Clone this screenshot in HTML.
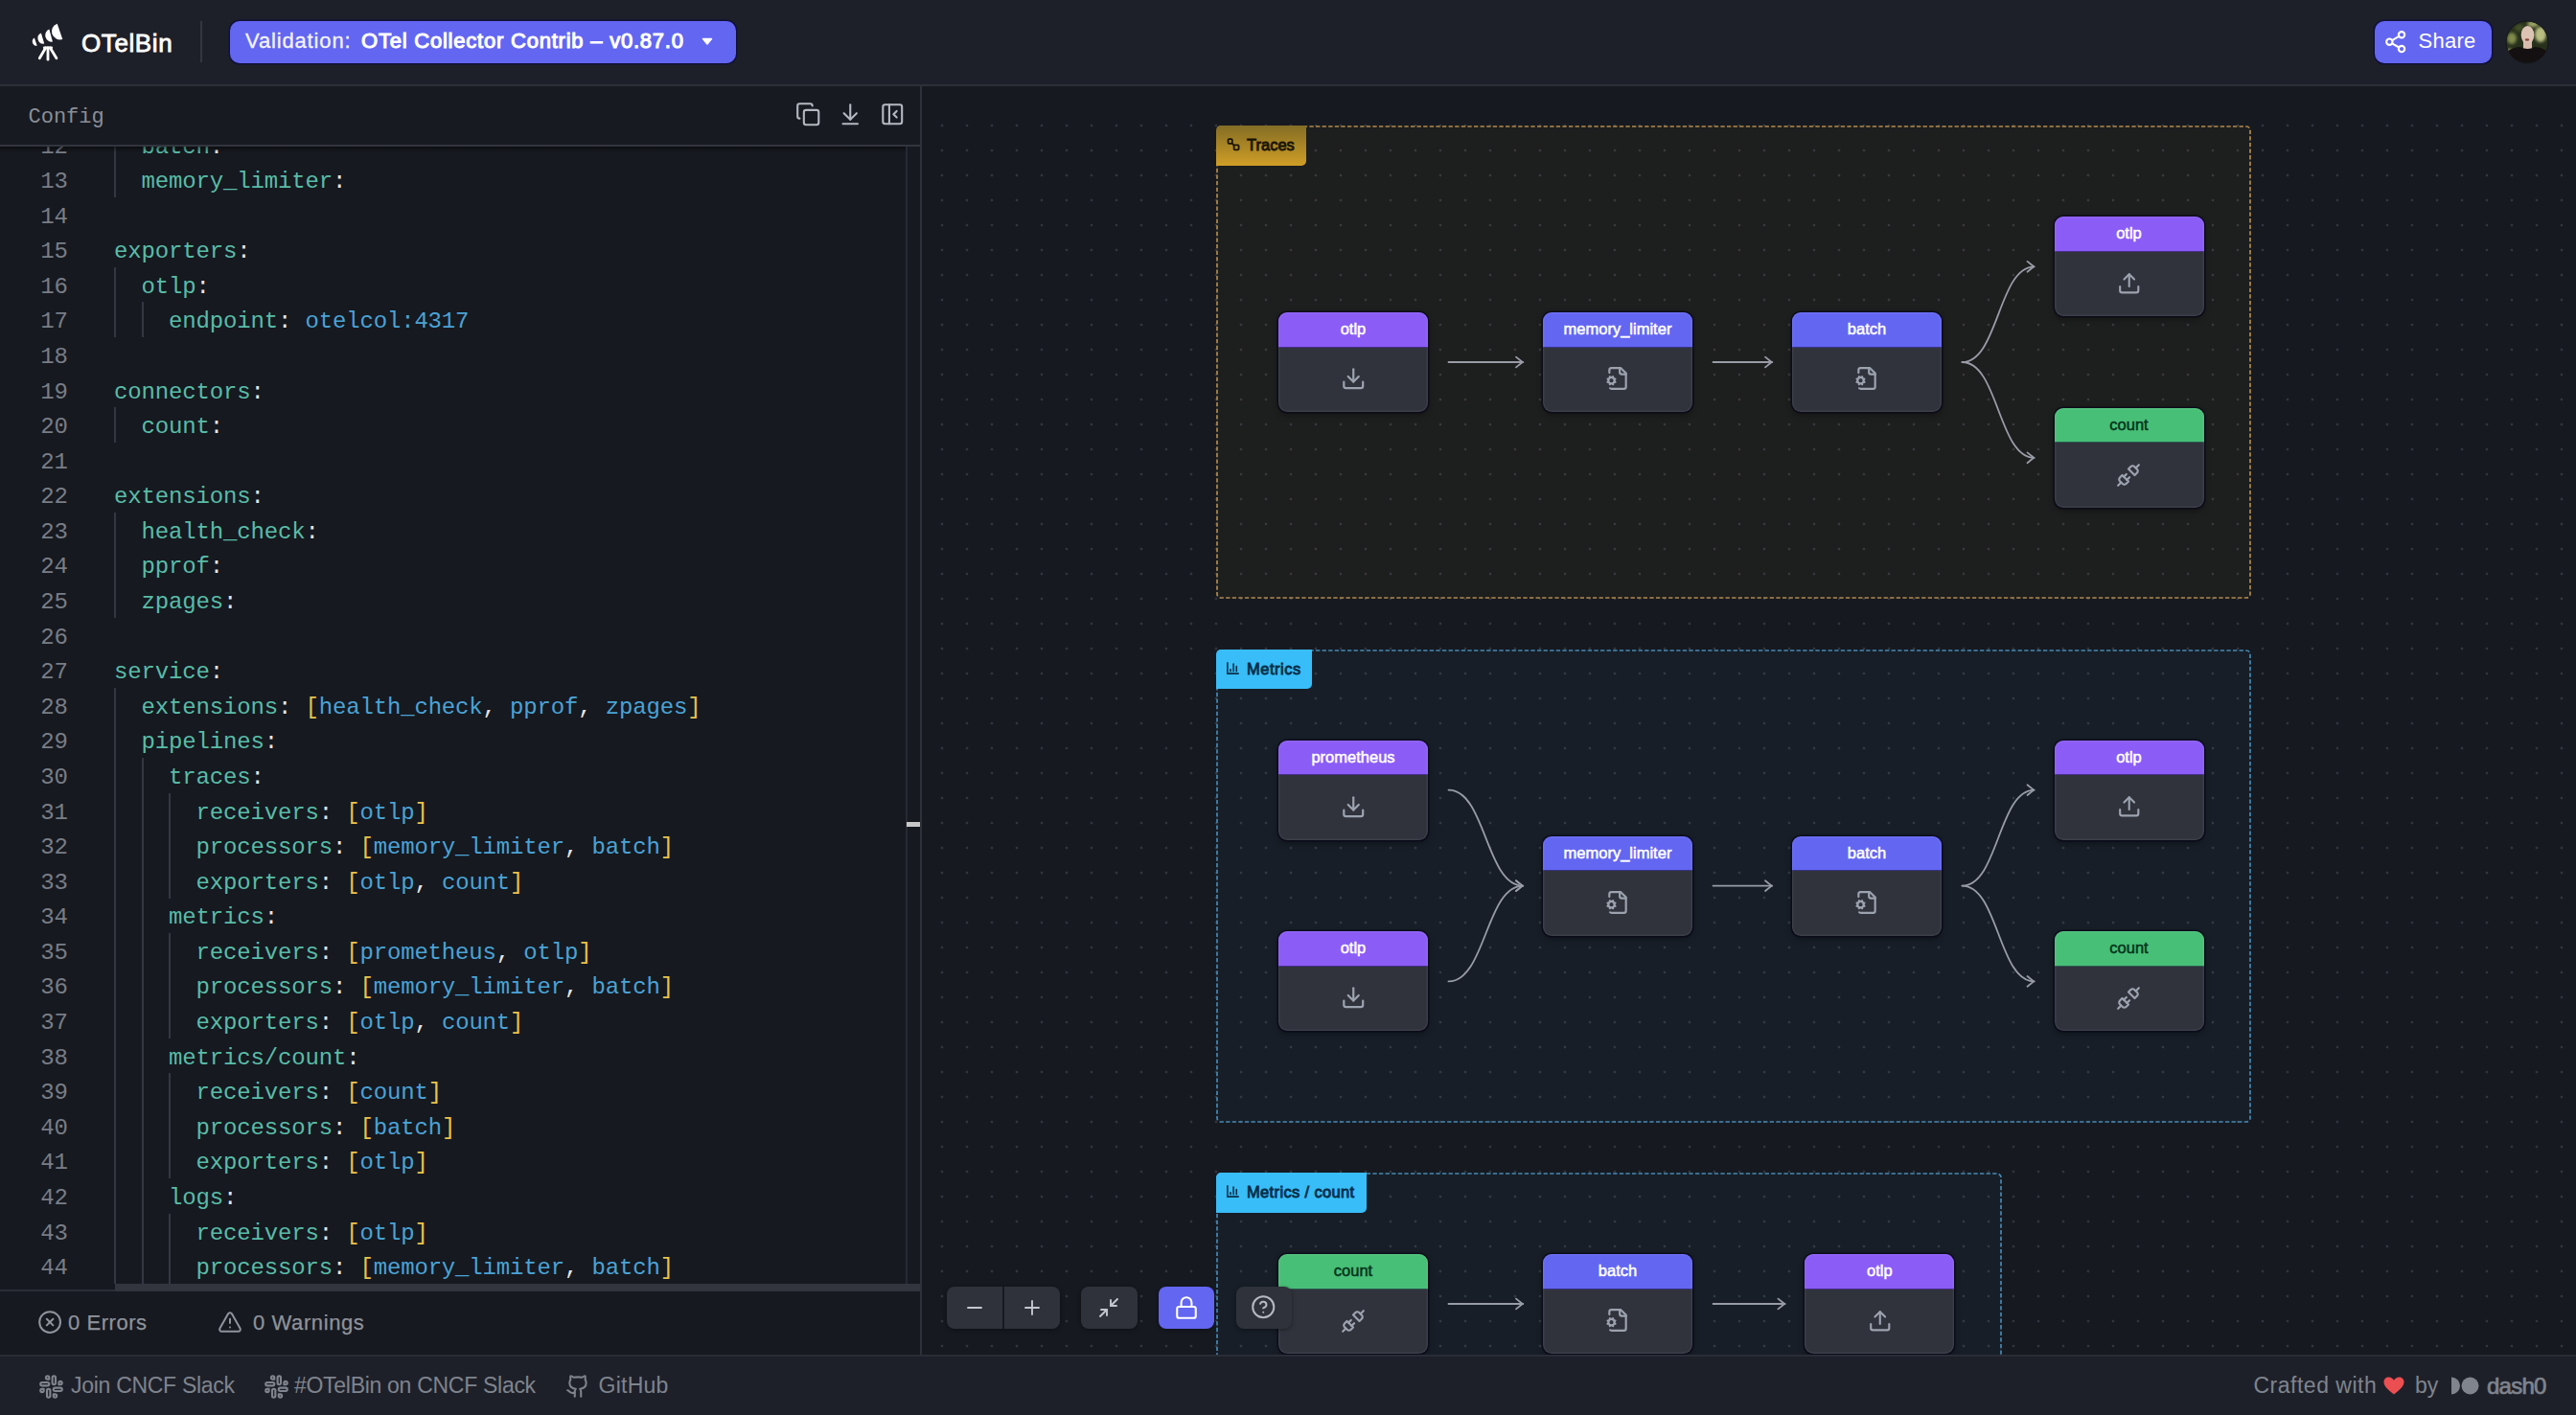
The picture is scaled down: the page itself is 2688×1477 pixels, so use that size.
<!DOCTYPE html><html><head><meta charset="utf-8"><title>OTelBin</title><style>
*{box-sizing:border-box;margin:0;padding:0}
html,body{width:2688px;height:1477px;overflow:hidden;background:#161920;font-family:"Liberation Sans",sans-serif;position:relative}
.a{position:absolute}
.ic{position:absolute;overflow:visible}
#hdr{position:absolute;left:0;top:0;width:2688px;height:90px;background:#1e2029;border-bottom:2px solid #2c2f38}
.btn{position:absolute;background:#6366f1;border-radius:10px;box-shadow:0 0 0 1.5px #10103a}
.txt{position:absolute;white-space:pre;line-height:1}
#left{position:absolute;left:0;top:90px;width:962px;height:1324px;background:#161920;border-right:2px solid #2e3139;overflow:hidden}
#cfgbar{position:absolute;left:0;top:0;width:960px;height:63px;border-bottom:2px solid #32353d;background:#171a21}
.ln{position:absolute;left:0;width:71px;text-align:right;font-family:"Liberation Mono",monospace;font-size:24px;line-height:36.58px;height:36.58px;color:#797d85;white-space:pre}
.cl{position:absolute;left:119px;font-family:"Liberation Mono",monospace;font-size:24px;letter-spacing:-0.16px;line-height:36.58px;height:36.58px;color:#e4e4e4;white-space:pre}
.tk{color:#59bca7}
.tc{color:#e6e6e6}
.tv{color:#4aa3d6}
.tb{color:#e9c349}
.ig{position:absolute;width:2px;background:#343740}
#canvas{position:absolute;left:962px;top:90px;width:1726px;height:1324px;overflow:hidden;background:#161920}
#cin{position:absolute;left:-962px;top:-90px;width:2688px;height:1477px}
.grp{position:absolute;border-radius:5px}
.glab{position:absolute;left:0;top:0;font-size:16.5px;-webkit-text-stroke:0.85px currentColor;line-height:1;white-space:pre;border-radius:5px 0 5px 0}
.node{position:absolute;width:156px;height:104px;border-radius:9px;background:#30333c;box-shadow:0 0 0 1.5px rgba(10,8,25,.75), 0 3px 6px rgba(0,0,0,.35);overflow:hidden}
.node:after{content:'';position:absolute;left:0;top:0;right:0;bottom:0;border-radius:9px;box-shadow:inset 0 0 0 1.5px rgba(255,255,255,.06)}
.nh{position:absolute;left:0;top:0;width:156px;height:36.5px;border-bottom:1.5px solid rgba(20,10,50,.55);text-align:center;font-size:16.5px;line-height:35px;white-space:pre;-webkit-text-stroke:0.5px currentColor}
.ctl{position:absolute;top:1343px;height:43.5px;background:#2f323b;border-radius:8px;box-shadow:0 1px 4px rgba(0,0,0,.4)}
#foot{position:absolute;left:0;top:1414px;width:2688px;height:63px;background:#1e2029;border-top:2px solid #2a2d35}
</style></head><body>
<div id="hdr"></div>
<svg class="ic" style="left:0;top:0;width:2688px;height:100px" viewBox="0 0 2688 100">
<g fill="#ffffff">
<path d="M59.7 24.7 A8.5 8.5 0 0 0 65.3 40.9 Z"/>
<path d="M51.4 30.4 A6.9 6.9 0 0 0 54.9 43.6 Z"/>
<path d="M42.9 34.4 A5.9 5.9 0 0 0 46.2 45.6 Z"/>
<path d="M35.9 39.5 A4.5 4.5 0 0 0 38.7 47.8 Z"/>
</g>
<g stroke="#ffffff" stroke-width="2.8" stroke-linecap="round" fill="none">
<path d="M46.3 49.8 H53.7"/>
<path d="M47.6 50 L41.3 60.8"/>
<path d="M50 50 V62.2"/>
<path d="M52.4 50 L58.9 60.8"/>
</g></svg>
<div class="txt" style="left:85px;top:31.59px;font-size:26px;color:#ffffff;font-weight:normal;-webkit-text-stroke:0.8px #fff;letter-spacing:0.6px">OTelBin</div>
<div class="a" style="left:209px;top:22px;width:2px;height:43px;background:#34373f"></div>
<div class="btn" style="left:240px;top:22px;width:528px;height:44px"></div>
<div class="txt" style="left:256px;top:32.28px;font-size:22px;color:#f4f4ff;font-weight:normal;letter-spacing:0.85px;-webkit-text-stroke:0.3px #f4f4ff">Validation:</div>
<div class="txt" style="left:377px;top:32.28px;font-size:22px;color:#ffffff;font-weight:normal;-webkit-text-stroke:1.05px #fff;letter-spacing:0.78px">OTel Collector Contrib – v0.87.0</div>
<svg class="ic" style="left:730px;top:38px;width:16px;height:10px" viewBox="0 0 16 10"><path d="M3.5 2.5 L12.5 2.5 L8 8 Z" fill="#fff" stroke="#fff" stroke-width="1.5" stroke-linejoin="round"/></svg>
<div class="btn" style="left:2478px;top:22px;width:122px;height:44px"></div>
<svg class="ic" style="left:2487px;top:31.2px;width:25.4px;height:25.4px" viewBox="0 0 24 24" fill="none" stroke="#ffffff" stroke-width="2" stroke-linecap="round" stroke-linejoin="round" ><circle cx="18" cy="5" r="3"/><circle cx="6" cy="12" r="3"/><circle cx="18" cy="19" r="3"/><line x1="8.59" x2="15.42" y1="13.51" y2="17.49"/><line x1="15.41" x2="8.59" y1="6.51" y2="10.49"/></svg>
<div class="txt" style="left:2523.5px;top:31.88px;font-size:22px;color:#ffffff;font-weight:normal;letter-spacing:0.25px">Share</div>
<svg class="ic" style="left:2614px;top:21px;width:46px;height:46px" viewBox="0 0 46 46">
<defs><clipPath id="av"><circle cx="23" cy="23" r="22"/></clipPath>
<filter id="bl" x="-30%" y="-30%" width="160%" height="160%"><feGaussianBlur stdDeviation="1.5"/></filter></defs>
<g clip-path="url(#av)">
<rect x="0" y="0" width="46" height="46" fill="#27301a"/>
<g filter="url(#bl)">
<ellipse cx="37" cy="15" rx="6" ry="8" fill="#b9bd80"/>
<ellipse cx="7" cy="19" rx="5" ry="6" fill="#7f8a4c"/>
<ellipse cx="29" cy="4" rx="6" ry="3.5" fill="#9aa063"/>
<ellipse cx="15" cy="8" rx="5" ry="4" fill="#3f4d26"/>
<ellipse cx="5" cy="33" rx="3" ry="3" fill="#a7ad7a"/>
</g>
<ellipse cx="23.5" cy="15.5" rx="6.8" ry="9.5" fill="#dcc3b4"/>
<ellipse cx="23" cy="20.5" rx="2.3" ry="1.2" fill="#8a4a3c"/>
<rect x="19" y="23" width="9" height="8" fill="#d9bcae"/>
<path d="M0 46 L0 36 Q5 28 16 28 Q23.5 32 31 28 Q41 28 46 36 L46 46 Z" fill="#140f10"/>
</g>
<circle cx="23" cy="23" r="22" fill="none" stroke="#15171c" stroke-width="1"/>
</svg>
<div id="left"><div id="cfgbar"></div>
</div>
<div class="txt" style="left:29.5px;top:112.14px;font-size:22px;color:#8a8e96;font-family:'Liberation Mono',monospace;">Config</div>
<svg class="ic" style="left:829.5px;top:105.5px;width:26.5px;height:26.5px" viewBox="0 0 24 24" fill="none" stroke="#b4b8c0" stroke-width="1.9" stroke-linecap="round" stroke-linejoin="round" ><rect width="14" height="14" x="8" y="8" rx="2" ry="2"/><path d="M4 16c-1.1 0-2-.9-2-2V4c0-1.1.9-2 2-2h10c1.1 0 2 .9 2 2"/></svg>
<svg class="ic" style="left:873.5px;top:105.5px;width:26.5px;height:26.5px" viewBox="0 0 24 24" fill="none" stroke="#b4b8c0" stroke-width="1.9" stroke-linecap="round" stroke-linejoin="round" ><path d="M12 17V3"/><path d="m6 11 6 6 6-6"/><path d="M19 21H5"/></svg>
<svg class="ic" style="left:917.5px;top:105.5px;width:26.5px;height:26.5px" viewBox="0 0 24 24" fill="none" stroke="#b4b8c0" stroke-width="1.9" stroke-linecap="round" stroke-linejoin="round" ><rect width="18" height="18" x="3" y="3" rx="2"/><path d="M9 3v18"/><path d="m16 15-3-3 3-3"/></svg>
<div class="a" style="left:0;top:153px;width:960px;height:1194px;overflow:hidden"><div class="a" style="left:0;top:-153px;width:960px;height:1500px">
<div class="ln" style="top:135.52px">12</div>
<div class="cl" style="top:135.52px">  <span class="tk">batch</span><span class="tc">:</span></div>
<div class="ln" style="top:172.10px">13</div>
<div class="cl" style="top:172.10px">  <span class="tk">memory_limiter</span><span class="tc">:</span></div>
<div class="ln" style="top:208.68px">14</div>
<div class="cl" style="top:208.68px"></div>
<div class="ln" style="top:245.26px">15</div>
<div class="cl" style="top:245.26px"><span class="tk">exporters</span><span class="tc">:</span></div>
<div class="ln" style="top:281.84px">16</div>
<div class="cl" style="top:281.84px">  <span class="tk">otlp</span><span class="tc">:</span></div>
<div class="ln" style="top:318.42px">17</div>
<div class="cl" style="top:318.42px">    <span class="tk">endpoint</span><span class="tc">: </span><span class="tv">otelcol:4317</span></div>
<div class="ln" style="top:355.00px">18</div>
<div class="cl" style="top:355.00px"></div>
<div class="ln" style="top:391.58px">19</div>
<div class="cl" style="top:391.58px"><span class="tk">connectors</span><span class="tc">:</span></div>
<div class="ln" style="top:428.16px">20</div>
<div class="cl" style="top:428.16px">  <span class="tk">count</span><span class="tc">:</span></div>
<div class="ln" style="top:464.74px">21</div>
<div class="cl" style="top:464.74px"></div>
<div class="ln" style="top:501.32px">22</div>
<div class="cl" style="top:501.32px"><span class="tk">extensions</span><span class="tc">:</span></div>
<div class="ln" style="top:537.90px">23</div>
<div class="cl" style="top:537.90px">  <span class="tk">health_check</span><span class="tc">:</span></div>
<div class="ln" style="top:574.48px">24</div>
<div class="cl" style="top:574.48px">  <span class="tk">pprof</span><span class="tc">:</span></div>
<div class="ln" style="top:611.06px">25</div>
<div class="cl" style="top:611.06px">  <span class="tk">zpages</span><span class="tc">:</span></div>
<div class="ln" style="top:647.64px">26</div>
<div class="cl" style="top:647.64px"></div>
<div class="ln" style="top:684.22px">27</div>
<div class="cl" style="top:684.22px"><span class="tk">service</span><span class="tc">:</span></div>
<div class="ln" style="top:720.80px">28</div>
<div class="cl" style="top:720.80px">  <span class="tk">extensions</span><span class="tc">: </span><span class="tb">[</span><span class="tv">health_check</span><span class="tc">, </span><span class="tv">pprof</span><span class="tc">, </span><span class="tv">zpages</span><span class="tb">]</span></div>
<div class="ln" style="top:757.38px">29</div>
<div class="cl" style="top:757.38px">  <span class="tk">pipelines</span><span class="tc">:</span></div>
<div class="ln" style="top:793.96px">30</div>
<div class="cl" style="top:793.96px">    <span class="tk">traces</span><span class="tc">:</span></div>
<div class="ln" style="top:830.54px">31</div>
<div class="cl" style="top:830.54px">      <span class="tk">receivers</span><span class="tc">: </span><span class="tb">[</span><span class="tv">otlp</span><span class="tb">]</span></div>
<div class="ln" style="top:867.12px">32</div>
<div class="cl" style="top:867.12px">      <span class="tk">processors</span><span class="tc">: </span><span class="tb">[</span><span class="tv">memory_limiter</span><span class="tc">, </span><span class="tv">batch</span><span class="tb">]</span></div>
<div class="ln" style="top:903.70px">33</div>
<div class="cl" style="top:903.70px">      <span class="tk">exporters</span><span class="tc">: </span><span class="tb">[</span><span class="tv">otlp</span><span class="tc">, </span><span class="tv">count</span><span class="tb">]</span></div>
<div class="ln" style="top:940.28px">34</div>
<div class="cl" style="top:940.28px">    <span class="tk">metrics</span><span class="tc">:</span></div>
<div class="ln" style="top:976.86px">35</div>
<div class="cl" style="top:976.86px">      <span class="tk">receivers</span><span class="tc">: </span><span class="tb">[</span><span class="tv">prometheus</span><span class="tc">, </span><span class="tv">otlp</span><span class="tb">]</span></div>
<div class="ln" style="top:1013.44px">36</div>
<div class="cl" style="top:1013.44px">      <span class="tk">processors</span><span class="tc">: </span><span class="tb">[</span><span class="tv">memory_limiter</span><span class="tc">, </span><span class="tv">batch</span><span class="tb">]</span></div>
<div class="ln" style="top:1050.02px">37</div>
<div class="cl" style="top:1050.02px">      <span class="tk">exporters</span><span class="tc">: </span><span class="tb">[</span><span class="tv">otlp</span><span class="tc">, </span><span class="tv">count</span><span class="tb">]</span></div>
<div class="ln" style="top:1086.60px">38</div>
<div class="cl" style="top:1086.60px">    <span class="tk">metrics/count</span><span class="tc">:</span></div>
<div class="ln" style="top:1123.18px">39</div>
<div class="cl" style="top:1123.18px">      <span class="tk">receivers</span><span class="tc">: </span><span class="tb">[</span><span class="tv">count</span><span class="tb">]</span></div>
<div class="ln" style="top:1159.76px">40</div>
<div class="cl" style="top:1159.76px">      <span class="tk">processors</span><span class="tc">: </span><span class="tb">[</span><span class="tv">batch</span><span class="tb">]</span></div>
<div class="ln" style="top:1196.34px">41</div>
<div class="cl" style="top:1196.34px">      <span class="tk">exporters</span><span class="tc">: </span><span class="tb">[</span><span class="tv">otlp</span><span class="tb">]</span></div>
<div class="ln" style="top:1232.92px">42</div>
<div class="cl" style="top:1232.92px">    <span class="tk">logs</span><span class="tc">:</span></div>
<div class="ln" style="top:1269.50px">43</div>
<div class="cl" style="top:1269.50px">      <span class="tk">receivers</span><span class="tc">: </span><span class="tb">[</span><span class="tv">otlp</span><span class="tb">]</span></div>
<div class="ln" style="top:1306.08px">44</div>
<div class="cl" style="top:1306.08px">      <span class="tk">processors</span><span class="tc">: </span><span class="tb">[</span><span class="tv">memory_limiter</span><span class="tc">, </span><span class="tv">batch</span><span class="tb">]</span></div>
<div class="ig" style="left:119.0px;top:132.52px;height:36.88px"></div>
<div class="ig" style="left:119.0px;top:169.10px;height:36.88px"></div>
<div class="ig" style="left:119.0px;top:278.84px;height:36.88px"></div>
<div class="ig" style="left:119.0px;top:315.42px;height:36.88px"></div>
<div class="ig" style="left:119.0px;top:425.16px;height:36.88px"></div>
<div class="ig" style="left:119.0px;top:534.90px;height:36.88px"></div>
<div class="ig" style="left:119.0px;top:571.48px;height:36.88px"></div>
<div class="ig" style="left:119.0px;top:608.06px;height:36.88px"></div>
<div class="ig" style="left:119.0px;top:717.80px;height:36.88px"></div>
<div class="ig" style="left:119.0px;top:754.38px;height:36.88px"></div>
<div class="ig" style="left:119.0px;top:790.96px;height:36.88px"></div>
<div class="ig" style="left:119.0px;top:827.54px;height:36.88px"></div>
<div class="ig" style="left:119.0px;top:864.12px;height:36.88px"></div>
<div class="ig" style="left:119.0px;top:900.70px;height:36.88px"></div>
<div class="ig" style="left:119.0px;top:937.28px;height:36.88px"></div>
<div class="ig" style="left:119.0px;top:973.86px;height:36.88px"></div>
<div class="ig" style="left:119.0px;top:1010.44px;height:36.88px"></div>
<div class="ig" style="left:119.0px;top:1047.02px;height:36.88px"></div>
<div class="ig" style="left:119.0px;top:1083.60px;height:36.88px"></div>
<div class="ig" style="left:119.0px;top:1120.18px;height:36.88px"></div>
<div class="ig" style="left:119.0px;top:1156.76px;height:36.88px"></div>
<div class="ig" style="left:119.0px;top:1193.34px;height:36.88px"></div>
<div class="ig" style="left:119.0px;top:1229.92px;height:36.88px"></div>
<div class="ig" style="left:119.0px;top:1266.50px;height:36.88px"></div>
<div class="ig" style="left:119.0px;top:1303.08px;height:36.88px"></div>
<div class="ig" style="left:147.5px;top:315.42px;height:36.88px"></div>
<div class="ig" style="left:147.5px;top:790.96px;height:36.88px"></div>
<div class="ig" style="left:147.5px;top:827.54px;height:36.88px"></div>
<div class="ig" style="left:147.5px;top:864.12px;height:36.88px"></div>
<div class="ig" style="left:147.5px;top:900.70px;height:36.88px"></div>
<div class="ig" style="left:147.5px;top:937.28px;height:36.88px"></div>
<div class="ig" style="left:147.5px;top:973.86px;height:36.88px"></div>
<div class="ig" style="left:147.5px;top:1010.44px;height:36.88px"></div>
<div class="ig" style="left:147.5px;top:1047.02px;height:36.88px"></div>
<div class="ig" style="left:147.5px;top:1083.60px;height:36.88px"></div>
<div class="ig" style="left:147.5px;top:1120.18px;height:36.88px"></div>
<div class="ig" style="left:147.5px;top:1156.76px;height:36.88px"></div>
<div class="ig" style="left:147.5px;top:1193.34px;height:36.88px"></div>
<div class="ig" style="left:147.5px;top:1229.92px;height:36.88px"></div>
<div class="ig" style="left:147.5px;top:1266.50px;height:36.88px"></div>
<div class="ig" style="left:147.5px;top:1303.08px;height:36.88px"></div>
<div class="ig" style="left:176.0px;top:827.54px;height:36.88px"></div>
<div class="ig" style="left:176.0px;top:864.12px;height:36.88px"></div>
<div class="ig" style="left:176.0px;top:900.70px;height:36.88px"></div>
<div class="ig" style="left:176.0px;top:973.86px;height:36.88px"></div>
<div class="ig" style="left:176.0px;top:1010.44px;height:36.88px"></div>
<div class="ig" style="left:176.0px;top:1047.02px;height:36.88px"></div>
<div class="ig" style="left:176.0px;top:1120.18px;height:36.88px"></div>
<div class="ig" style="left:176.0px;top:1156.76px;height:36.88px"></div>
<div class="ig" style="left:176.0px;top:1193.34px;height:36.88px"></div>
<div class="ig" style="left:176.0px;top:1266.50px;height:36.88px"></div>
<div class="ig" style="left:176.0px;top:1303.08px;height:36.88px"></div>
</div><div class="a" style="left:0;top:0;width:945px;height:6px;background:linear-gradient(rgba(0,0,0,.45),rgba(0,0,0,0))"></div></div>
<div class="a" style="left:945px;top:153px;width:2px;height:1194px;background:#262931"></div>
<div class="a" style="left:946px;top:858px;width:14px;height:4.5px;background:#c8c8c8"></div>
<div class="a" style="left:0;top:1346px;width:960px;height:1.5px;background:#2a2d35"></div>
<div class="a" style="left:120px;top:1340px;width:840px;height:7.5px;background:#32353d"></div>
<svg class="ic" style="left:38.8px;top:1366.9px;width:26.2px;height:26.2px" viewBox="0 0 24 24" fill="none" stroke="#8f939b" stroke-width="1.85" stroke-linecap="round" stroke-linejoin="round" ><circle cx="12" cy="12" r="10"/><path d="m15 9-6 6"/><path d="m9 9 6 6"/></svg>
<div class="txt" style="left:71px;top:1369.68px;font-size:22px;color:#8f939b;font-weight:normal;letter-spacing:0.55px;-webkit-text-stroke:0.25px #8f939b">0 Errors</div>
<svg class="ic" style="left:226.5px;top:1367.3px;width:26px;height:26px" viewBox="0 0 24 24" fill="none" stroke="#8f939b" stroke-width="1.85" stroke-linecap="round" stroke-linejoin="round" ><path d="m21.73 18-8-14a2 2 0 0 0-3.48 0l-8 14A2 2 0 0 0 4 21h16a2 2 0 0 0 1.73-3"/><path d="M12 9v4"/><path d="M12 17h.01"/></svg>
<div class="txt" style="left:264px;top:1369.68px;font-size:22px;color:#8f939b;font-weight:normal;letter-spacing:0.6px;-webkit-text-stroke:0.25px #8f939b">0 Warnings</div>
<div id="canvas"><div id="cin">
<div class="a" style="left:962px;top:118px;width:1726px;height:1296px;background-image:radial-gradient(circle,#32353d 1.1px,transparent 1.7px);background-size:26px 26px;background-position:-18px 0px"></div>
<div class="grp" style="left:1269px;top:131px;width:1080px;height:494px;background:rgba(234,179,8,.035)"><svg class="ic" style="left:0;top:0;width:1080px;height:494px" viewBox="0 0 1080 494"><rect x="1" y="1" width="1078" height="492" rx="4" fill="none" stroke="#b08a4e" stroke-width="1.7" stroke-dasharray="4.3 2.3"/></svg><div class="glab" style="width:94px;height:42px;background:linear-gradient(#836d25,#d09e26);color:#1a1404"><span class="a" style="left:32px;top:12.0px;letter-spacing:0px">Traces</span><svg class="ic" style="left:11px;top:13px;width:14px;height:14px" viewBox="0 0 14 14" fill="none" stroke="#1a1404" stroke-width="1.8"><rect x="1.5" y="1.2" width="4.3" height="4.6" rx="1.1"/><rect x="7.6" y="7.4" width="5" height="5" rx="1.1"/><path d="M5.3 5.3 L7.9 7.9"/></svg></div></div>
<div class="grp" style="left:1269px;top:678px;width:1080px;height:494px;background:rgba(56,189,248,.03)"><svg class="ic" style="left:0;top:0;width:1080px;height:494px" viewBox="0 0 1080 494"><rect x="1" y="1" width="1078" height="492" rx="4" fill="none" stroke="#4589b3" stroke-width="1.7" stroke-dasharray="4.3 2.3"/></svg><div class="glab" style="width:100px;height:41px;background:#38bdf8;color:#082f49"><span class="a" style="left:32px;top:11.5px;letter-spacing:0.5px">Metrics</span><svg class="ic" style="left:10px;top:12px;width:15px;height:15px" viewBox="0 0 24 24" fill="none" stroke="#082f49" stroke-width="2.6" stroke-linecap="round"><path d="M3 3v18h18"/><path d="M18 17V9"/><path d="M13 17V5"/><path d="M8 17v-3"/></svg></div></div>
<div class="grp" style="left:1269px;top:1224px;width:820px;height:400px;background:rgba(56,189,248,.03)"><svg class="ic" style="left:0;top:0;width:820px;height:400px" viewBox="0 0 820 400"><rect x="1" y="1" width="818" height="398" rx="4" fill="none" stroke="#4589b3" stroke-width="1.7" stroke-dasharray="4.3 2.3"/></svg><div class="glab" style="width:157px;height:42px;background:#38bdf8;color:#082f49"><span class="a" style="left:32px;top:12.0px;letter-spacing:0.35px">Metrics / count</span><svg class="ic" style="left:10px;top:12px;width:15px;height:15px" viewBox="0 0 24 24" fill="none" stroke="#082f49" stroke-width="2.6" stroke-linecap="round"><path d="M3 3v18h18"/><path d="M18 17V9"/><path d="M13 17V5"/><path d="M8 17v-3"/></svg></div></div>
<svg class="ic" style="left:0;top:0;width:2688px;height:1477px" viewBox="0 0 2688 1477" fill="none" stroke="#989ca6" stroke-width="1.8" stroke-linecap="round" stroke-linejoin="round"><path d="M1511.5,378.0 L1589.3,378.0"/><path d="M1582.0,372.6 L1588.7,378.0 L1582.0,383.4"/><path d="M1787.5,378.0 L1849.3,378.0"/><path d="M1842.0,372.6 L1848.7,378.0 L1842.0,383.4"/><path d="M2047.5,378.0 C2085.2,378.0 2085.2,278.3 2122.8,278.3"/><path d="M2115.5,272.9 L2122.2,278.3 L2115.5,283.7"/><path d="M2047.5,378.0 C2085.2,378.0 2085.2,477.8 2122.8,477.8"/><path d="M2115.5,472.4 L2122.2,477.8 L2115.5,483.2"/><path d="M1511.5,824.6 C1550.4,824.6 1550.4,924.6 1589.3,924.6"/><path d="M1582.0,919.2 L1588.7,924.6 L1582.0,930.0"/><path d="M1511.5,1024.4 C1550.4,1024.4 1550.4,924.6 1589.3,924.6"/><path d="M1582.0,919.2 L1588.7,924.6 L1582.0,930.0"/><path d="M1787.5,924.6 L1849.3,924.6"/><path d="M1842.0,919.2 L1848.7,924.6 L1842.0,930.0"/><path d="M2047.5,924.6 C2085.2,924.6 2085.2,824.6 2122.8,824.6"/><path d="M2115.5,819.2 L2122.2,824.6 L2115.5,830.0"/><path d="M2047.5,924.6 C2085.2,924.6 2085.2,1024.4 2122.8,1024.4"/><path d="M2115.5,1019.0 L2122.2,1024.4 L2115.5,1029.8"/><path d="M1511.5,1361.0 L1589.3,1361.0"/><path d="M1582.0,1355.6 L1588.7,1361.0 L1582.0,1366.4"/><path d="M1787.5,1361.0 L1862.7,1361.0"/><path d="M1855.4,1355.6 L1862.1,1361.0 L1855.4,1366.4"/></svg>
<div class="node" style="left:1334px;top:326px"><div class="nh" style="background:#8b5cf6;color:#ffffff">otlp</div><svg class="ic" style="left:64.75px;top:56.0px;width:26.5px;height:26.5px" viewBox="0 0 24 24" fill="none" stroke="#9ca3af" stroke-width="2" stroke-linecap="round" stroke-linejoin="round" ><path d="M21 15v4a2 2 0 0 1-2 2H5a2 2 0 0 1-2-2v-4"/><polyline points="7 10 12 15 17 10"/><line x1="12" x2="12" y1="15" y2="3"/></svg></div>
<div class="node" style="left:1610px;top:326px"><div class="nh" style="background:#6366f1;color:#ffffff">memory_limiter</div><svg class="ic" style="left:65.0px;top:56.25px;width:26px;height:26px" viewBox="0 0 24 24" fill="none" stroke="#9ca3af" stroke-width="2" stroke-linecap="round" stroke-linejoin="round" ><path d="M14 2v4a2 2 0 0 0 2 2h4"/><path d="m2.305 15.53.923-.382"/><path d="m3.228 12.852-.924-.383"/><path d="M4.677 21.5a2 2 0 0 0 1.313.5H18a2 2 0 0 0 2-2V7l-5-5H6a2 2 0 0 0-2 2v2.5"/><path d="m4.852 11.228-.383-.923"/><path d="m4.852 16.772-.383.924"/><path d="m7.148 11.228.383-.923"/><path d="m7.53 17.696-.382-.924"/><path d="m8.772 12.852.923-.383"/><path d="m8.772 15.148.923.383"/><circle cx="6" cy="14" r="3"/></svg></div>
<div class="node" style="left:1870px;top:326px"><div class="nh" style="background:#6366f1;color:#ffffff">batch</div><svg class="ic" style="left:65.0px;top:56.25px;width:26px;height:26px" viewBox="0 0 24 24" fill="none" stroke="#9ca3af" stroke-width="2" stroke-linecap="round" stroke-linejoin="round" ><path d="M14 2v4a2 2 0 0 0 2 2h4"/><path d="m2.305 15.53.923-.382"/><path d="m3.228 12.852-.924-.383"/><path d="M4.677 21.5a2 2 0 0 0 1.313.5H18a2 2 0 0 0 2-2V7l-5-5H6a2 2 0 0 0-2 2v2.5"/><path d="m4.852 11.228-.383-.923"/><path d="m4.852 16.772-.383.924"/><path d="m7.148 11.228.383-.923"/><path d="m7.53 17.696-.382-.924"/><path d="m8.772 12.852.923-.383"/><path d="m8.772 15.148.923.383"/><circle cx="6" cy="14" r="3"/></svg></div>
<div class="node" style="left:2143.5px;top:226.3px"><div class="nh" style="background:#8b5cf6;color:#ffffff">otlp</div><svg class="ic" style="left:65.25px;top:56.5px;width:25.5px;height:25.5px" viewBox="0 0 24 24" fill="none" stroke="#9ca3af" stroke-width="2" stroke-linecap="round" stroke-linejoin="round" ><path d="M21 15v4a2 2 0 0 1-2 2H5a2 2 0 0 1-2-2v-4"/><polyline points="17 8 12 3 7 8"/><line x1="12" x2="12" y1="3" y2="15"/></svg></div>
<div class="node" style="left:2143.5px;top:425.8px"><div class="nh" style="background:#48bf77;color:#06341a">count</div><svg class="ic" style="left:64.7px;top:56.85px;width:26px;height:26px" viewBox="0 0 24 24" fill="none" stroke="#9ca3af" stroke-width="2" stroke-linecap="round" stroke-linejoin="round" ><path d="m19 5 3-3"/><path d="m2 22 3-3"/><path d="M6.3 20.3a2.4 2.4 0 0 0 3.4 0L12 18l-6-6-2.3 2.3a2.4 2.4 0 0 0 0 3.4Z"/><path d="M7.5 13.5 10 11"/><path d="M10.5 16.5 13 14"/><path d="m12 6 6 6 2.3-2.3a2.4 2.4 0 0 0 0-3.4l-2.6-2.6a2.4 2.4 0 0 0-3.4 0Z"/></svg></div>
<div class="node" style="left:1334px;top:772.6px"><div class="nh" style="background:#8b5cf6;color:#ffffff">prometheus</div><svg class="ic" style="left:64.75px;top:56.0px;width:26.5px;height:26.5px" viewBox="0 0 24 24" fill="none" stroke="#9ca3af" stroke-width="2" stroke-linecap="round" stroke-linejoin="round" ><path d="M21 15v4a2 2 0 0 1-2 2H5a2 2 0 0 1-2-2v-4"/><polyline points="7 10 12 15 17 10"/><line x1="12" x2="12" y1="15" y2="3"/></svg></div>
<div class="node" style="left:1334px;top:972.4px"><div class="nh" style="background:#8b5cf6;color:#ffffff">otlp</div><svg class="ic" style="left:64.75px;top:56.0px;width:26.5px;height:26.5px" viewBox="0 0 24 24" fill="none" stroke="#9ca3af" stroke-width="2" stroke-linecap="round" stroke-linejoin="round" ><path d="M21 15v4a2 2 0 0 1-2 2H5a2 2 0 0 1-2-2v-4"/><polyline points="7 10 12 15 17 10"/><line x1="12" x2="12" y1="15" y2="3"/></svg></div>
<div class="node" style="left:1610px;top:872.6px"><div class="nh" style="background:#6366f1;color:#ffffff">memory_limiter</div><svg class="ic" style="left:65.0px;top:56.25px;width:26px;height:26px" viewBox="0 0 24 24" fill="none" stroke="#9ca3af" stroke-width="2" stroke-linecap="round" stroke-linejoin="round" ><path d="M14 2v4a2 2 0 0 0 2 2h4"/><path d="m2.305 15.53.923-.382"/><path d="m3.228 12.852-.924-.383"/><path d="M4.677 21.5a2 2 0 0 0 1.313.5H18a2 2 0 0 0 2-2V7l-5-5H6a2 2 0 0 0-2 2v2.5"/><path d="m4.852 11.228-.383-.923"/><path d="m4.852 16.772-.383.924"/><path d="m7.148 11.228.383-.923"/><path d="m7.53 17.696-.382-.924"/><path d="m8.772 12.852.923-.383"/><path d="m8.772 15.148.923.383"/><circle cx="6" cy="14" r="3"/></svg></div>
<div class="node" style="left:1870px;top:872.6px"><div class="nh" style="background:#6366f1;color:#ffffff">batch</div><svg class="ic" style="left:65.0px;top:56.25px;width:26px;height:26px" viewBox="0 0 24 24" fill="none" stroke="#9ca3af" stroke-width="2" stroke-linecap="round" stroke-linejoin="round" ><path d="M14 2v4a2 2 0 0 0 2 2h4"/><path d="m2.305 15.53.923-.382"/><path d="m3.228 12.852-.924-.383"/><path d="M4.677 21.5a2 2 0 0 0 1.313.5H18a2 2 0 0 0 2-2V7l-5-5H6a2 2 0 0 0-2 2v2.5"/><path d="m4.852 11.228-.383-.923"/><path d="m4.852 16.772-.383.924"/><path d="m7.148 11.228.383-.923"/><path d="m7.53 17.696-.382-.924"/><path d="m8.772 12.852.923-.383"/><path d="m8.772 15.148.923.383"/><circle cx="6" cy="14" r="3"/></svg></div>
<div class="node" style="left:2143.5px;top:772.6px"><div class="nh" style="background:#8b5cf6;color:#ffffff">otlp</div><svg class="ic" style="left:65.25px;top:56.5px;width:25.5px;height:25.5px" viewBox="0 0 24 24" fill="none" stroke="#9ca3af" stroke-width="2" stroke-linecap="round" stroke-linejoin="round" ><path d="M21 15v4a2 2 0 0 1-2 2H5a2 2 0 0 1-2-2v-4"/><polyline points="17 8 12 3 7 8"/><line x1="12" x2="12" y1="3" y2="15"/></svg></div>
<div class="node" style="left:2143.5px;top:972.4px"><div class="nh" style="background:#48bf77;color:#06341a">count</div><svg class="ic" style="left:64.7px;top:56.85px;width:26px;height:26px" viewBox="0 0 24 24" fill="none" stroke="#9ca3af" stroke-width="2" stroke-linecap="round" stroke-linejoin="round" ><path d="m19 5 3-3"/><path d="m2 22 3-3"/><path d="M6.3 20.3a2.4 2.4 0 0 0 3.4 0L12 18l-6-6-2.3 2.3a2.4 2.4 0 0 0 0 3.4Z"/><path d="M7.5 13.5 10 11"/><path d="M10.5 16.5 13 14"/><path d="m12 6 6 6 2.3-2.3a2.4 2.4 0 0 0 0-3.4l-2.6-2.6a2.4 2.4 0 0 0-3.4 0Z"/></svg></div>
<div class="node" style="left:1334px;top:1309px"><div class="nh" style="background:#48bf77;color:#06341a">count</div><svg class="ic" style="left:64.7px;top:56.85px;width:26px;height:26px" viewBox="0 0 24 24" fill="none" stroke="#9ca3af" stroke-width="2" stroke-linecap="round" stroke-linejoin="round" ><path d="m19 5 3-3"/><path d="m2 22 3-3"/><path d="M6.3 20.3a2.4 2.4 0 0 0 3.4 0L12 18l-6-6-2.3 2.3a2.4 2.4 0 0 0 0 3.4Z"/><path d="M7.5 13.5 10 11"/><path d="M10.5 16.5 13 14"/><path d="m12 6 6 6 2.3-2.3a2.4 2.4 0 0 0 0-3.4l-2.6-2.6a2.4 2.4 0 0 0-3.4 0Z"/></svg></div>
<div class="node" style="left:1610px;top:1309px"><div class="nh" style="background:#6366f1;color:#ffffff">batch</div><svg class="ic" style="left:65.0px;top:56.25px;width:26px;height:26px" viewBox="0 0 24 24" fill="none" stroke="#9ca3af" stroke-width="2" stroke-linecap="round" stroke-linejoin="round" ><path d="M14 2v4a2 2 0 0 0 2 2h4"/><path d="m2.305 15.53.923-.382"/><path d="m3.228 12.852-.924-.383"/><path d="M4.677 21.5a2 2 0 0 0 1.313.5H18a2 2 0 0 0 2-2V7l-5-5H6a2 2 0 0 0-2 2v2.5"/><path d="m4.852 11.228-.383-.923"/><path d="m4.852 16.772-.383.924"/><path d="m7.148 11.228.383-.923"/><path d="m7.53 17.696-.382-.924"/><path d="m8.772 12.852.923-.383"/><path d="m8.772 15.148.923.383"/><circle cx="6" cy="14" r="3"/></svg></div>
<div class="node" style="left:1883.4px;top:1309px"><div class="nh" style="background:#8b5cf6;color:#ffffff">otlp</div><svg class="ic" style="left:65.25px;top:56.5px;width:25.5px;height:25.5px" viewBox="0 0 24 24" fill="none" stroke="#9ca3af" stroke-width="2" stroke-linecap="round" stroke-linejoin="round" ><path d="M21 15v4a2 2 0 0 1-2 2H5a2 2 0 0 1-2-2v-4"/><polyline points="17 8 12 3 7 8"/><line x1="12" x2="12" y1="3" y2="15"/></svg></div>
<div class="ctl" style="left:988px;width:117.5px"></div>
<div class="a" style="left:1046px;top:1343px;width:1.5px;height:43.5px;background:#181a20"></div>
<svg class="ic" style="left:1004.5px;top:1352.5px;width:24px;height:24px" viewBox="0 0 24 24" fill="none" stroke="#c4c7ce" stroke-width="1.9" stroke-linecap="round" stroke-linejoin="round" ><path d="M5 12h14"/></svg>
<svg class="ic" style="left:1065px;top:1352.5px;width:24px;height:24px" viewBox="0 0 24 24" fill="none" stroke="#c4c7ce" stroke-width="1.9" stroke-linecap="round" stroke-linejoin="round" ><path d="M5 12h14"/><path d="M12 5v14"/></svg>
<div class="ctl" style="left:1128px;width:58.5px"></div>
<svg class="ic" style="left:1145px;top:1352.5px;width:24px;height:24px" viewBox="0 0 24 24" fill="none" stroke="#c4c7ce" stroke-width="1.9" stroke-linecap="round" stroke-linejoin="round" ><polyline points="4 14 10 14 10 20"/><polyline points="20 10 14 10 14 4"/><line x1="14" x2="21" y1="10" y2="3"/><line x1="3" x2="10" y1="21" y2="14"/></svg>
<div class="ctl" style="left:1208.5px;width:58.5px;background:#6366f1"></div>
<svg class="ic" style="left:1225px;top:1351.5px;width:26px;height:26px" viewBox="0 0 24 24" fill="none" stroke="#ffffff" stroke-width="1.9" stroke-linecap="round" stroke-linejoin="round" ><rect width="18" height="11" x="3" y="11" rx="2" ry="2"/><path d="M7 11V7a5 5 0 0 1 10 0v4"/></svg>
<div class="ctl" style="left:1289.5px;width:58px"></div>
<svg class="ic" style="left:1304.5px;top:1350.5px;width:26.5px;height:26.5px" viewBox="0 0 24 24" fill="none" stroke="#b4b8c0" stroke-width="1.8" stroke-linecap="round" stroke-linejoin="round" ><circle cx="12" cy="12" r="10"/><path d="M9.09 9a3 3 0 0 1 5.83 1c0 2-3 3-3 3"/><path d="M12 17h.01"/></svg>
</div></div>
<div id="foot"></div>
<svg class="ic" style="left:39.5px;top:1433.5px;width:27px;height:27px" viewBox="0 0 24 24" fill="none" stroke="#7f848d" stroke-width="1.9" stroke-linecap="round" stroke-linejoin="round" ><rect width="3" height="8" x="13" y="2" rx="1.5"/><path d="M19 8.5V10h1.5A1.5 1.5 0 1 0 19 8.5"/><rect width="3" height="8" x="8" y="14" rx="1.5"/><path d="M5 15.5V14H3.5A1.5 1.5 0 1 0 5 15.5"/><rect width="8" height="3" x="14" y="13" rx="1.5"/><path d="M15.5 19H14v1.5a1.5 1.5 0 1 0 1.5-1.5"/><rect width="8" height="3" x="2" y="8" rx="1.5"/><path d="M8.5 5H10V3.5A1.5 1.5 0 1 0 8.5 5"/></svg>
<div class="txt" style="left:74px;top:1434.83px;font-size:23px;color:#7f848d;font-weight:normal;letter-spacing:-0.29px">Join CNCF Slack</div>
<svg class="ic" style="left:274.5px;top:1433.5px;width:27px;height:27px" viewBox="0 0 24 24" fill="none" stroke="#7f848d" stroke-width="1.9" stroke-linecap="round" stroke-linejoin="round" ><rect width="3" height="8" x="13" y="2" rx="1.5"/><path d="M19 8.5V10h1.5A1.5 1.5 0 1 0 19 8.5"/><rect width="3" height="8" x="8" y="14" rx="1.5"/><path d="M5 15.5V14H3.5A1.5 1.5 0 1 0 5 15.5"/><rect width="8" height="3" x="14" y="13" rx="1.5"/><path d="M15.5 19H14v1.5a1.5 1.5 0 1 0 1.5-1.5"/><rect width="8" height="3" x="2" y="8" rx="1.5"/><path d="M8.5 5H10V3.5A1.5 1.5 0 1 0 8.5 5"/></svg>
<div class="txt" style="left:307px;top:1434.83px;font-size:23px;color:#7f848d;font-weight:normal;letter-spacing:-0.29px">#OTelBin on CNCF Slack</div>
<svg class="ic" style="left:590px;top:1433.5px;width:26px;height:26px" viewBox="0 0 24 24" fill="none" stroke="#7f848d" stroke-width="1.9" stroke-linecap="round" stroke-linejoin="round" ><path d="M15 22v-4a4.8 4.8 0 0 0-1-3.5c3 0 6-2 6-5.5.08-1.25-.27-2.48-1-3.5.28-1.15.28-2.35 0-3.5 0 0-1 0-3 1.5-2.64-.5-5.36-.5-8 0C6 2 5 2 5 2c-.3 1.15-.3 2.35 0 3.5A5.403 5.403 0 0 0 4 9c0 3.5 3 5.5 6 5.5-.39.49-.68 1.05-.85 1.65-.17.6-.22 1.23-.15 1.85v4"/><path d="M9 18c-4.51 2-5-2-7-2"/></svg>
<div class="txt" style="left:624.5px;top:1434.83px;font-size:23px;color:#7f848d;font-weight:normal;letter-spacing:0.26px">GitHub</div>
<div class="txt" style="left:2351.5px;top:1434.73px;font-size:23px;color:#7f848d;font-weight:normal;letter-spacing:0.5px">Crafted with</div>
<svg class="ic" style="left:2487px;top:1437px;width:22px;height:19px" viewBox="0 0 22 19"><path d="M11 18.5 C 4 13, 0.5 9.5, 0.5 5.5 C0.5 2.5 2.8 0.5 5.6 0.5 C 8 0.5 9.8 2 11 3.8 C 12.2 2 14 0.5 16.4 0.5 C19.2 0.5 21.5 2.5 21.5 5.5 C21.5 9.5 18 13 11 18.5Z" fill="#ec4f52"/></svg>
<div class="txt" style="left:2520px;top:1434.73px;font-size:23px;color:#7f848d;font-weight:normal;">by</div>
<svg class="ic" style="left:2557px;top:1437px;width:32px;height:19px" viewBox="0 0 32 19"><path d="M1 0.5 A9 9 0 0 1 1 18.5 Z" fill="#7f848d"/><circle cx="20.5" cy="9.5" r="9" fill="#7f848d"/></svg>
<div class="txt" style="left:2595px;top:1435.18px;font-size:24px;color:#7f848d;font-weight:normal;letter-spacing:-0.75px;-webkit-text-stroke:0.7px #7f848d">dash0</div>
</body></html>
